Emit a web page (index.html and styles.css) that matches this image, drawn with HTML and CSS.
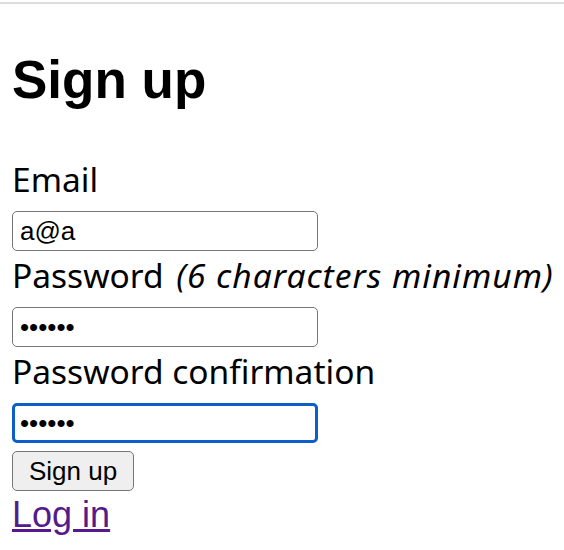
FILE: index.html
```html
<!DOCTYPE html>
<html lang="en">
<head>
    <meta charset="UTF-8">
    <meta name="viewport" content="width=device-width, initial-scale=1.0">
    <title>Sign up</title>
    <link rel="stylesheet" href="styles.css">
</head>

<body>
    <div class="topbar"></div>

    <div class="page">
        <h1>Sign up</h1>

        <!-- Registration form -->
        <form class="signup-form" action="#">
            <label for="email">Email</label>
            <input type="email" id="email" value="a@a">

            <label for="password">Password <em>(6 characters minimum)</em></label>
            <input type="password" id="password" value="123456">

            <label for="password_confirmation">Password confirmation</label>
            <input type="password" id="password_confirmation" class="focused" value="123456">

            <div class="actions">
                <button type="submit">Sign up</button>
            </div>
        </form>

        <a href="#" class="login-link">Log in</a>
    </div>
</body>
</html>
```

FILE: styles.css
```css
body {
    margin: 0;
    background-color: #fff;
    color: #000;
    font-family: 'Noto Sans', sans-serif;
}

.topbar {
    height: 2px;
    margin-top: 2px;
    background-color: #dcdce0;
}

.page {
    padding: 0 12px;
}

h1 {
    font-family: 'Liberation Sans', Arial, sans-serif;
    font-size: 53px;
    font-weight: 700;
    line-height: 64px;
    margin: 44px 0 0;
}

.signup-form {
    display: flex;
    flex-direction: column;
    align-items: flex-start;
    margin-top: 43px;
}

.signup-form label {
    font-size: 33.5px;
    line-height: 48px;
    margin-bottom: 8px;
    white-space: nowrap;
}

.signup-form label em {
    margin-left: 4px;
    letter-spacing: 1px;
}

.signup-form input {
    box-sizing: border-box;
    width: 306px;
    height: 40px;
    padding: 0 7px;
    border: 1px solid #767676;
    border-radius: 5px;
    font-family: 'Liberation Sans', Arial, sans-serif;
    font-size: 26px;
    color: #000;
    background-color: #fff;
    outline: none;
}

.signup-form input.focused {
    border: 3px solid #0a5fca;
    padding: 0 5px;
}

.actions {
    margin-top: 8px;
}

.actions button {
    box-sizing: border-box;
    height: 40px;
    padding: 0 16px;
    border: 1px solid #767676;
    border-radius: 5px;
    background-color: #efefef;
    font-family: 'Liberation Sans', Arial, sans-serif;
    font-size: 26px;
    color: #000;
}

.login-link {
    display: inline-block;
    font-family: 'Liberation Sans', Arial, sans-serif;
    font-size: 36px;
    line-height: 48px;
    color: #551a8b;
}
```
